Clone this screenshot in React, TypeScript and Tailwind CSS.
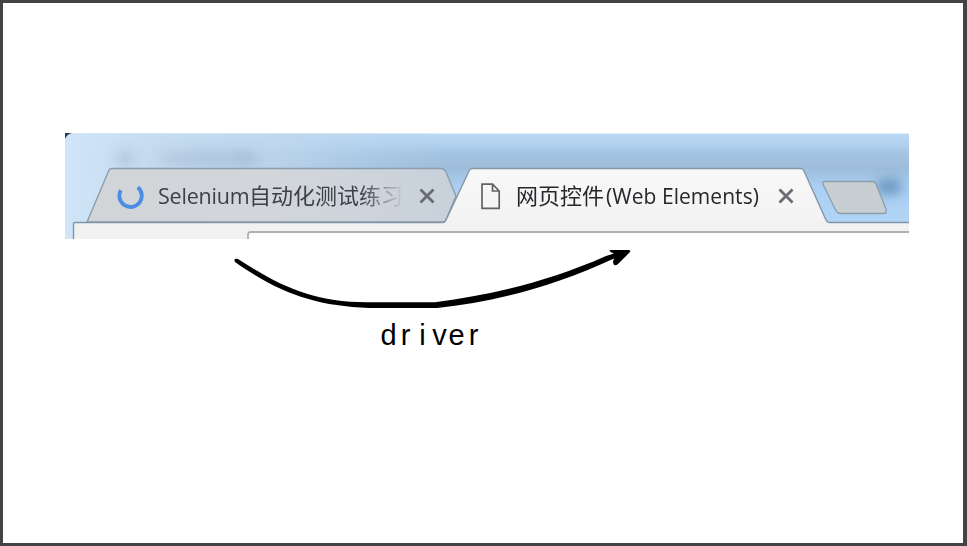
import React from "react";

const uiFont = "font-['Open_Sans','Noto_Sans_CJK_SC',sans-serif]";

function CloseIcon() {
  return (
    <svg className="h-4 w-4 shrink-0" viewBox="0 0 16 16" fill="none" stroke="#686b70" strokeWidth="2.8">
      <path d="M1.5 1.5 14.5 14.5M14.5 1.5 1.5 14.5" />
    </svg>
  );
}

function WindowFrame() {
  return (
    <svg className="absolute inset-0 h-full w-full" viewBox="0 0 844 106" fill="none">
      <defs>
        <linearGradient id="glass" x1="0" y1="0" x2="0" y2="1">
          <stop offset="0" stopColor="#b9d9f4" />
          <stop offset="0.1" stopColor="#b1d1ee" />
          <stop offset="0.2" stopColor="#a2c3e1" />
          <stop offset="0.33" stopColor="#9dbddb" />
          <stop offset="0.5" stopColor="#abcff2" />
          <stop offset="1" stopColor="#b5d8f8" />
        </linearGradient>
        <linearGradient id="shine" x1="0" y1="0" x2="1" y2="0">
          <stop offset="0" stopColor="#d0e5f8" />
          <stop offset="0.1" stopColor="#c8ddf0" stopOpacity="0.9" />
          <stop offset="0.25" stopColor="#c3d9ee" stopOpacity="0.75" />
          <stop offset="0.45" stopColor="#b9d4ee" stopOpacity="0" />
        </linearGradient>
        <linearGradient id="idle" x1="0" y1="0" x2="1" y2="0">
          <stop offset="0" stopColor="#d1d5d8" />
          <stop offset="0.5" stopColor="#d2d6db" />
          <stop offset="1" stopColor="#c8d1db" />
        </linearGradient>
        <linearGradient id="active" x1="0" y1="0" x2="0" y2="1">
          <stop offset="0" stopColor="#f8f8f9" />
          <stop offset="1" stopColor="#f1f1f1" />
        </linearGradient>
        <filter id="soft" x="-50%" y="-100%" width="200%" height="300%">
          <feGaussianBlur stdDeviation="6" />
        </filter>
      </defs>
      <rect y="0.5" width="844" height="105.5" fill="url(#glass)" />
      <rect y="0.5" width="844" height="105.5" fill="url(#shine)" />
      <path d="M0 0H7Q2 1 0 6Z" fill="#28384c" />
      <g filter="url(#soft)" fill="#718da8">
        <ellipse cx="60" cy="25" rx="9" ry="7" opacity="0.3" />
        <ellipse cx="142" cy="25" rx="50" ry="8" opacity="0.2" />
        <ellipse cx="182" cy="25" rx="12" ry="6" opacity="0.2" />
        <ellipse cx="824" cy="54" rx="14" ry="8" fill="#3f729f" opacity="0.6" />
      </g>
      <path d="M9 106V89.5H380L405 35.5H738L762 89.5H844V106Z" fill="#f1f1f1" />
      <path d="M22 89 44 37Q45 35.5 47 35.5H376Q379 35.5 381 39L391 63 380 89Z" fill="url(#idle)" stroke="#8d9dac" strokeWidth="1.4" />
      <path d="M380 90 404 37Q405 35.5 407 35.5H736Q738 35.5 739 37L762 89.5V106H380Z" fill="url(#active)" />
      <path d="M8.5 106V91Q8.5 89.5 10 89.5H378Q380 89.5 381 87L404 38Q405 35.5 407 35.5H736Q738 35.5 739 38L761 87Q762 89.5 764 89.5H844" stroke="#8396a8" strokeWidth="1.4" />
      <path d="M183 106V101Q183 98.5 186 98.5H844V106Z" fill="#fdfdfd" />
      <path d="M183 106V102Q183 99 186 99H844" stroke="#b1b1b3" strokeWidth="1.8" />
      <path d="M760 48.5H807Q810 48.5 811 51L821 76Q822 80.5 819 80.5H776Q773 80.5 771 78L758 51Q757 48.5 760 48.5Z" fill="#c7cfd2" stroke="#8c9dab" strokeWidth="1.3" />
    </svg>
  );
}

function BrowserTabs() {
  return (
    <section className="relative ml-[62px] mt-[130px] h-[106px] w-[844px] shrink-0 overflow-hidden">
      <WindowFrame />
      <div className={"relative mt-[35px] flex h-14 items-center whitespace-nowrap text-[22px] text-[#3d4147] " + uiFont}>
        <svg className="ml-[52px] h-7 w-7 shrink-0" viewBox="0 0 28 28" fill="none">
          <path d="M3.8 8.3A11.2 11.2 0 1 0 20.8 5.2" stroke="#4b8ce4" strokeWidth="3.8" />
        </svg>
        <div className="ml-[13px] flex w-[246px] shrink-0 items-baseline overflow-hidden [mask-image:linear-gradient(to_right,black_82%,transparent_100%)]">
          <span className="w-[91px] shrink-0 text-[21.5px] tracking-[-0.2px]">Selenium</span>
          <span>自动化测试练习</span>
        </div>
        <span className="ml-[15px] flex"><CloseIcon /></span>
        <svg className="ml-[46px] h-7 w-5 shrink-0" viewBox="0 0 20 28" fill="none" stroke="#606264" strokeWidth="1.7">
          <path d="M1 2.2H11.5L18.2 9V26.3H1ZM11.5 2.2V9H18.2" />
        </svg>
        <div className="ml-[15px] flex w-[247px] shrink-0 items-baseline text-[#25272b]">
          <span className="w-[90px] shrink-0">网页控件</span>
          <span className="text-[21px] tracking-[0.05px]">(Web Elements)</span>
        </div>
        <span className="ml-[15px] flex"><CloseIcon /></span>
      </div>
    </section>
  );
}

function DriverArrow() {
  return (
    <svg className="ml-[222px] mt-1 h-[76px] w-[420px] shrink-0" viewBox="225 243 420 76">
      <path d="M235 262Q233 258 238 259C281 287 315 303 370 302.3H435C494 294 547 282 606 256L614 253.5Q607 250.5 611 250H629Q631 250.5 630 252L618 264Q614 267.5 613 262L614 258.5C553 287 494 302 437 308H369C315 306 279 293 235 262Z" />
    </svg>
  );
}

export default function App() {
  return (
    <main className="flex h-[546px] w-[967px] flex-col overflow-hidden border-[3px] border-r-4 border-[#444244] bg-white">
      <BrowserTabs />
      <DriverArrow />
      <div className="-mt-0.5 ml-[377px] flex h-9 w-[103px] text-[29px] leading-9 text-black font-['Liberation_Sans',sans-serif]">
        {"driver".split("").map((letter, index) => (
          <span key={index} className="flex w-[17px] justify-center">{letter}</span>
        ))}
      </div>
    </main>
  );
}
